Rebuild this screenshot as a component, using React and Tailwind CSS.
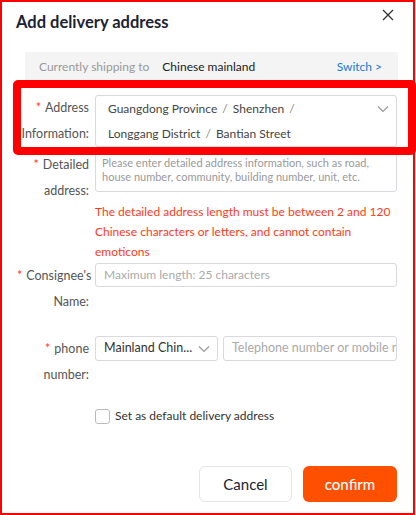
import React from "react";

const font = { fontFamily: 'Lato, "Liberation Sans", sans-serif' };

function Label({ l1, l2, star = true }) {
  return (
    <div className="w-[72px] shrink-0 text-right text-[12.5px] leading-[26px] text-[#555]">
      <div className="whitespace-nowrap">
        {star && <span className="text-[#ff3a1a] mr-[4px]">*</span>}
        {l1}
      </div>
      <div className="whitespace-nowrap">{l2}</div>
    </div>
  );
}

function Chevron({ className }) {
  return (
    <svg className={className} width="12" height="8" viewBox="0 0 12 8" fill="none">
      <path d="M1 1.5 L6 6.5 L11 1.5" stroke="#999" strokeWidth="1.2" />
    </svg>
  );
}

export default function App() {
  return (
    <div className="relative w-[416px] h-[515px] bg-white overflow-hidden" style={font}>
      {/* header */}
      <div className="flex items-center justify-between pl-[16px] pr-[22px] pt-[12px]">
        <div className="text-[16.5px] leading-[20px] font-bold text-[#1c2333]">Add delivery address</div>
        <svg width="12" height="12" viewBox="0 0 12 12" className="-mt-[14px]">
          <path d="M1 1 L11 11 M11 1 L1 11" stroke="#333" strokeWidth="1.3" />
        </svg>
      </div>

      {/* shipping bar */}
      <div className="ml-[25px] mr-[18px] mt-[20px] h-[30px] bg-[#f4f4f4] flex items-center pl-[14px] pr-[16px] text-[12px]">
        <span className="text-[#999]">Currently shipping to</span>
        <span className="ml-[13px] text-[#222]">Chinese mainland</span>
        <span className="ml-auto text-[#1a7ad6]">Switch &gt;</span>
      </div>

      {/* form */}
      <div className="pl-[17px] pr-[19px] mt-[13px]">
        {/* address */}
        <div className="flex gap-[6px]">
          <Label l1="Address" l2="Information:" />
          <div className="flex-1 min-w-0 h-[52px] border border-[#d9d9de] rounded-[3px] relative pl-[12px] text-[12px] text-[#444] leading-[25px]">
            <div>Guangdong Province <span className="text-[#888] mx-[2px]">/</span> Shenzhen <span className="text-[#888] mx-[2px]">/</span></div>
            <div>Longgang District <span className="text-[#888] mx-[2px]">/</span> Bantian Street</div>
            <Chevron className="absolute right-[7px] top-[9px]" />
          </div>
        </div>

        {/* detailed */}
        <div className="flex gap-[6px] mt-[5px]">
          <Label l1="Detailed" l2="address:" />
          <div className="flex-1 min-w-0">
            <div className="h-[40px] border border-[#d9d9de] rounded-[3px] px-[6px] pt-[3px] text-[11px] leading-[14px] text-[#999]">
              Please enter detailed address information, such as road, house number, community, building number, unit, etc.
            </div>
            <div className="mt-[10px] text-[12px] leading-[20px] text-[#ff3a1a]">
              The detailed address length must be between 2 and 120 Chinese characters or letters, and cannot contain emoticons
            </div>
          </div>
        </div>

        {/* consignee */}
        <div className="flex gap-[6px] mt-[1px]">
          <Label l1="Consignee's" l2="Name:" />
          <div className="flex-1 min-w-0">
            <div className="h-[24px] border border-[#d9d9de] rounded-[3px] px-[8px] flex items-center text-[12px] text-[#aaa]">
              Maximum length: 25 characters
            </div>
          </div>
        </div>

        {/* phone */}
        <div className="flex gap-[6px] mt-[21px]">
          <Label l1="phone" l2="number:" />
          <div className="flex-1 min-w-0 flex gap-[5px] items-start">
            <div className="w-[123px] shrink-0 h-[25px] border border-[#d9d9de] rounded-[3px] pl-[8px] pr-[7px] flex items-center justify-between text-[12.5px] text-[#333] whitespace-nowrap">
              <span>Mainland Chin...</span>
              <Chevron />
            </div>
            <div className="flex-1 min-w-0 h-[25px] border border-[#d9d9de] rounded-[3px] pl-[8px] flex items-center text-[12.5px] text-[#aaa] overflow-hidden whitespace-nowrap">
              Telephone number or mobile number
            </div>
          </div>
        </div>

        {/* checkbox */}
        <div className="flex items-center mt-[19px] ml-[78px]">
          <div className="w-[15px] h-[15px] border border-[#bbb] rounded-[3px] bg-white" />
          <span className="ml-[5px] text-[12px] text-[#333]">Set as default delivery address</span>
        </div>

        {/* buttons */}
        <div className="flex justify-end gap-[11px] mt-[41px]">
          <button className="w-[93px] h-[36px] rounded-[6px] border border-[#e3e3ea] bg-white text-[15px] text-[#1c2333]">Cancel</button>
          <button className="w-[94px] h-[36px] rounded-[6px] bg-[#ff5000] text-[15px] font-medium text-white">confirm</button>
        </div>
      </div>

      {/* annotation overlays */}
      <div className="absolute left-0 top-0 w-[415px] h-[515px] border-[2px] border-[#ff0000] pointer-events-none" />
      <div className="absolute left-[13px] top-[80px] w-[403px] h-[75px] border-[8px] border-[#ff0000] rounded-[5px] pointer-events-none" />
    </div>
  );
}
